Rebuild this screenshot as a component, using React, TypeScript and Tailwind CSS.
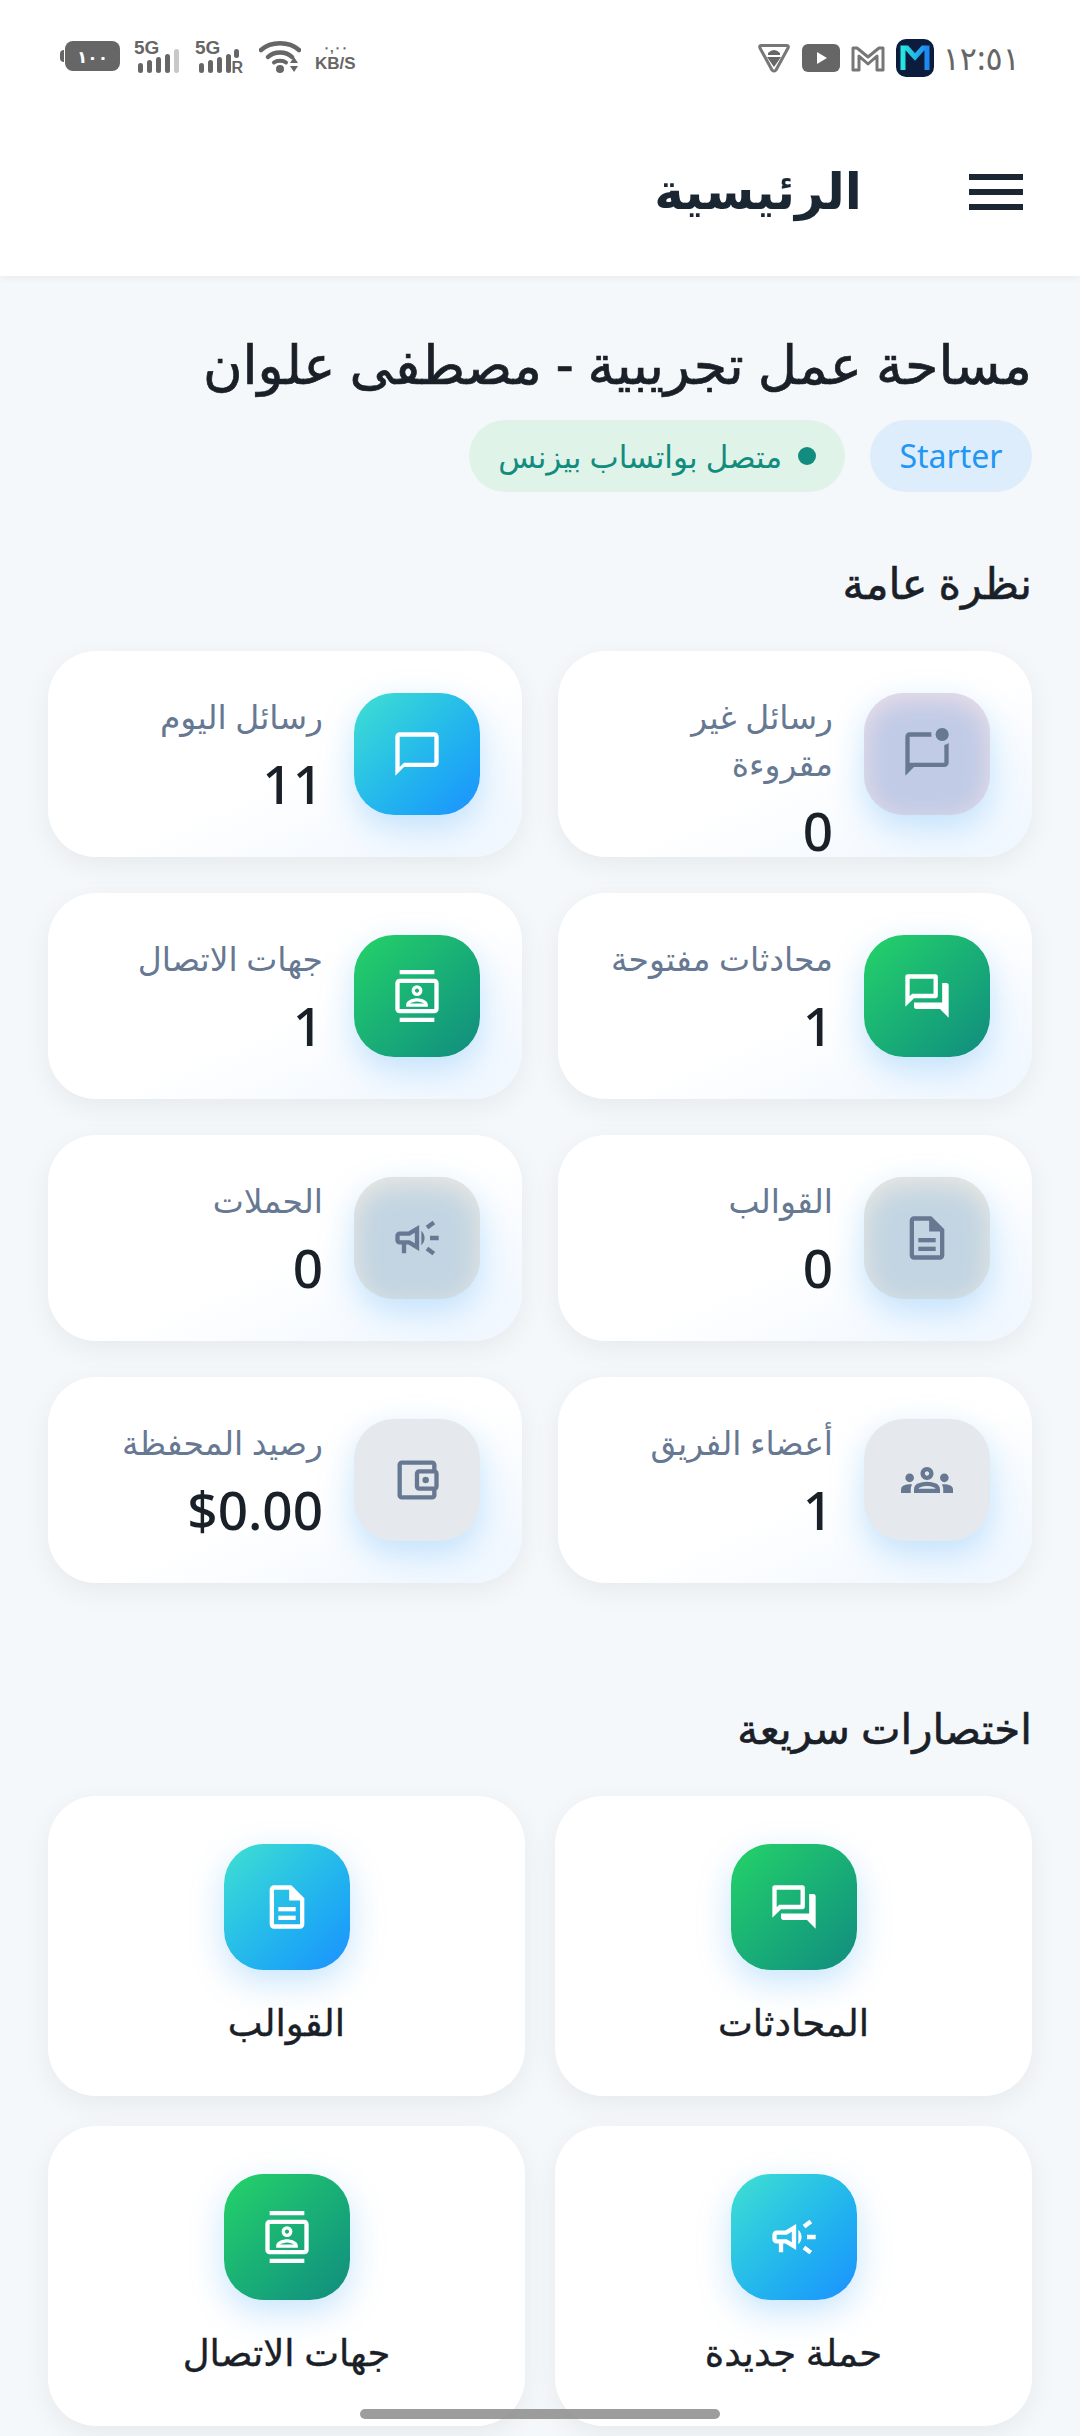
import { ReactNode } from 'react'
import {
    MdOutlineAccountBalanceWallet,
    MdOutlineCampaign,
    MdOutlineChatBubbleOutline,
    MdOutlineContacts,
    MdOutlineForum,
    MdOutlineGroups,
    MdOutlineMarkChatUnread,
} from 'react-icons/md'

const BLUE = 'bg-linear-to-br from-[#40e0d0] to-[#1e90ff] text-white'
const GREEN = 'bg-linear-to-br from-[#25d366] to-[#128c7e] text-white'
const PINK = 'bg-[#c1cbe6] shadow-[inset_0_6px_26px_#ecdfe8,0_12px_34px_rgba(33,150,243,0.25)] text-[#667892]'
const SAND = 'bg-[#c3d5e2] shadow-[inset_0_8px_26px_#eae8e2,0_12px_34px_rgba(33,150,243,0.25)] text-[#667892]'
const GRAY = 'bg-[#e5e9ed] text-[#667892]'

// description icon with a solid corner fold, the md one has only a line there
function DocIcon({ size }: { size: number }) {
    return (
        <svg width={size} height={size} viewBox="0 0 24 24" fill="currentColor">
            <path d="M14 2H6a2 2 0 0 0-2 2v16a2 2 0 0 0 2 2h12a2 2 0 0 0 2-2V8l-6-6zm4 18H6V4h7v5h5v11z" />
            <path d="M14 3l5 5h-5z" />
            <rect x="8" y="12" width="8" height="2" />
            <rect x="8" y="16" width="8" height="2" />
        </svg>
    )
}

const stats = [
    { label: 'رسائل غير مقروءة', value: '0', Icon: MdOutlineMarkChatUnread, tone: PINK },
    { label: 'رسائل اليوم', value: '11', Icon: MdOutlineChatBubbleOutline, tone: BLUE },
    { label: 'محادثات مفتوحة', value: '1', Icon: MdOutlineForum, tone: GREEN },
    { label: 'جهات الاتصال', value: '1', Icon: MdOutlineContacts, tone: GREEN },
    { label: 'القوالب', value: '0', Icon: DocIcon, tone: SAND },
    { label: 'الحملات', value: '0', Icon: MdOutlineCampaign, tone: SAND },
    { label: 'أعضاء الفريق', value: '1', Icon: MdOutlineGroups, tone: GRAY },
    { label: 'رصيد المحفظة', value: '$0.00', Icon: MdOutlineAccountBalanceWallet, tone: GRAY },
]

const shortcuts = [
    { label: 'المحادثات', Icon: MdOutlineForum, tone: GREEN },
    { label: 'القوالب', Icon: DocIcon, tone: BLUE },
    { label: 'حملة جديدة', Icon: MdOutlineCampaign, tone: BLUE },
    { label: 'جهات الاتصال', Icon: MdOutlineContacts, tone: GREEN },
]

function IconBox({ tone, className, children }: { tone: string; className: string; children: ReactNode }) {
    return (
        <div className={`flex w-[126px] shrink-0 items-center justify-center rounded-[40px] shadow-[0_12px_34px_rgba(33,150,243,0.25)] ${className} ${tone}`}>
            {children}
        </div>
    )
}

function Signal({ roaming }: { roaming?: boolean }) {
    return (
        <svg width="46" height="34" viewBox="0 0 46 34" className="overflow-visible text-[#666]">
            <text x="0" y="15" fontFamily="Liberation Sans" fontWeight="700" fontSize="19" fill="currentColor">5G</text>
            <rect x="4" y="24" width="5" height="10" rx="2.5" fill="currentColor" />
            <rect x="13" y="21" width="5" height="13" rx="2.5" fill="currentColor" />
            <rect x="22" y="18" width="5" height="16" rx="2.5" fill="currentColor" />
            <rect x="31" y="15" width="5" height="19" rx="2.5" fill="currentColor" />
            {roaming ? (
                <>
                    <rect x="39" y="10" width="5" height="9" rx="2.5" fill="currentColor" />
                    <text x="36.5" y="34" fontFamily="Liberation Sans" fontWeight="700" fontSize="16" fill="currentColor">R</text>
                </>
            ) : (
                <rect x="40" y="10" width="5" height="24" rx="2.5" fill="#c8c8c8" />
            )}
        </svg>
    )
}

function StatusBar() {
    return (
        <div dir="ltr" className="flex h-[110px] items-start justify-between pl-[60px] pr-[60px] pt-[39px] text-[#666]">
            <div className="flex items-center">
                <div className="flex items-center">
                    <div className="h-[12px] w-[4px] rounded-l-sm bg-[#666]" />
                    <div className="ml-px flex h-[30px] w-[55px] items-center justify-center rounded-[8px] bg-[#666] text-[17px] font-bold leading-none text-white">١٠٠</div>
                </div>
                <div className="ml-[14px]"><Signal /></div>
                <div className="ml-[15px]"><Signal roaming /></div>
                <svg width="42" height="34" viewBox="0 0 42 34" fill="none" className="ml-[18px]">
                    <path d="M2 11C12 2 30 2 40 11" stroke="#666" strokeWidth="4.5" strokeLinecap="round" />
                    <path d="M9 18C15 12 27 12 33 18" stroke="#666" strokeWidth="4.5" strokeLinecap="round" />
                    <path d="M15 23.5C18 21 24 21 27 23.5" stroke="#666" strokeWidth="4" strokeLinecap="round" />
                    <circle cx="21" cy="30" r="4" fill="#666" />
                    <path d="M31 24L35 18L39 24Z M31 27L39 27L35 33Z" fill="#666" />
                </svg>
                <div className="ml-[14px] flex flex-col items-center font-['Liberation_Sans',sans-serif] text-[17px] font-bold leading-none">
                    <span className="h-[15px] text-[13px] leading-[15px]">٠,٠٠</span>
                    <span>KB/S</span>
                </div>
            </div>
            <div className="flex items-center">
                <svg width="32" height="30" viewBox="0 0 32 30" fill="none">
                    <path d="M3 2.5H29Q31 2.5 30 5L18 27Q16 29 14 27L2 5Q1 2.5 3 2.5Z" stroke="#777" strokeWidth="3" />
                    <path d="M10 10Q16 4 22 10V12H10Z M9 14H23L16 24Z" fill="#666" />
                </svg>
                <svg width="38" height="28" viewBox="0 0 38 28" className="ml-[12px]">
                    <rect width="38" height="28" rx="6" fill="#666" />
                    <path d="M15 8L25 14L15 20Z" fill="#fff" />
                </svg>
                <svg width="34" height="27" viewBox="0 0 34 27" fill="none" className="ml-[11px]">
                    <path d="M2 25V3H6L17 12L28 3H32V25H26V11L17 19L8 11V25Z" stroke="#777" strokeWidth="3" strokeLinejoin="round" />
                </svg>
                <svg width="38" height="38" viewBox="0 0 38 38" fill="none" className="ml-[11px]">
                    <defs>
                        <linearGradient id="mLogo" x1="0" y1="0" x2="1" y2="0">
                            <stop offset="0" stopColor="#25e6e0" />
                            <stop offset="1" stopColor="#1e88f0" />
                        </linearGradient>
                    </defs>
                    <rect width="38" height="38" rx="10" fill="#0b1c3c" />
                    <path d="M7 31V9H11L19 18L27 9H31V31" stroke="url(#mLogo)" strokeWidth="5" />
                </svg>
                <span className="ml-[9px] text-[32px] font-normal leading-none">١٢:٥١</span>
            </div>
        </div>
    )
}

export default function App() {
    return (
        <div dir="rtl" className="relative h-[2436px] w-[1080px] overflow-hidden bg-[#f4f8fb] font-['Noto_Sans','DejaVu_Sans',sans-serif] text-[#1a2027]">
            <header className="h-[276px] bg-white shadow-[0_2px_8px_rgba(0,0,0,0.05)]">
                <StatusBar />
                <div className="flex h-[164px] items-center gap-[107px] pr-[57px]">
                    <div className="flex w-[54px] flex-col gap-[9px]">
                        <div className="h-[6px] bg-[#1a2733]" />
                        <div className="h-[6px] bg-[#1a2733]" />
                        <div className="h-[6px] bg-[#1a2733]" />
                    </div>
                    <h1 className="mb-[4px] text-[50px] font-bold leading-none text-[#1a2733]">الرئيسية</h1>
                </div>
            </header>

            <main className="px-[48px] pt-[50px]">
                <h2 className="text-[54px] leading-[74px] [-webkit-text-stroke:0.7px]">مساحة عمل تجريبية - مصطفى علوان</h2>
                <div className="mt-[20px] flex gap-[25px]">
                    <div className="flex h-[72px] w-[162px] items-center justify-center rounded-full bg-[#deedfb] text-[32px] text-[#2196f3]">Starter</div>
                    <div className="flex h-[72px] items-center gap-[16px] rounded-full bg-[#dff3e8] px-[29px] text-[31px] text-[#128c7e]">
                        <span className="h-[18px] w-[18px] rounded-full bg-[#128c7e]" />
                        متصل بواتساب بيزنس
                    </div>
                </div>

                <h3 className="mb-[38px] mt-[61px] text-[43px] leading-[60px] [-webkit-text-stroke:0.6px]">نظرة عامة</h3>
                <div className="grid grid-cols-2 gap-[36px]">
                    {stats.map(({ label, value, Icon, tone }) => (
                        <div key={label} className="flex h-[206px] gap-[31px] rounded-[48px] bg-linear-to-br from-white from-55% to-[#eef6ff] p-[42px] shadow-[0_8px_28px_rgba(0,0,0,0.06)]">
                            <IconBox tone={tone} className="h-[122px]">
                                <Icon size={52} />
                            </IconBox>
                            <div className="min-w-0">
                                <div className="text-[33px] leading-[47px] text-[#667892]">{label}</div>
                                <div dir="ltr" className="mt-[11px] text-right text-[53px] font-medium leading-[66px]">{value}</div>
                            </div>
                        </div>
                    ))}
                </div>

                <h3 className="mb-[38px] mt-[115px] text-[42px] leading-[60px] [-webkit-text-stroke:0.6px]">اختصارات سريعة</h3>
                <div className="grid grid-cols-2 gap-[30px]">
                    {shortcuts.map(({ label, Icon, tone }) => (
                        <div key={label} className="flex h-[300px] flex-col items-center rounded-[48px] bg-white pt-[48px] shadow-[0_8px_28px_rgba(0,0,0,0.06)]">
                            <IconBox tone={tone} className="h-[126px]">
                                <Icon size={52} />
                            </IconBox>
                            <div className="mt-[27px] text-[37px] leading-[50px] [-webkit-text-stroke:0.4px]">{label}</div>
                        </div>
                    ))}
                </div>
            </main>

            <div className="absolute bottom-[17px] left-[360px] h-[10px] w-[360px] rounded-full bg-[#8c8c8c]/85" />
        </div>
    )
}
